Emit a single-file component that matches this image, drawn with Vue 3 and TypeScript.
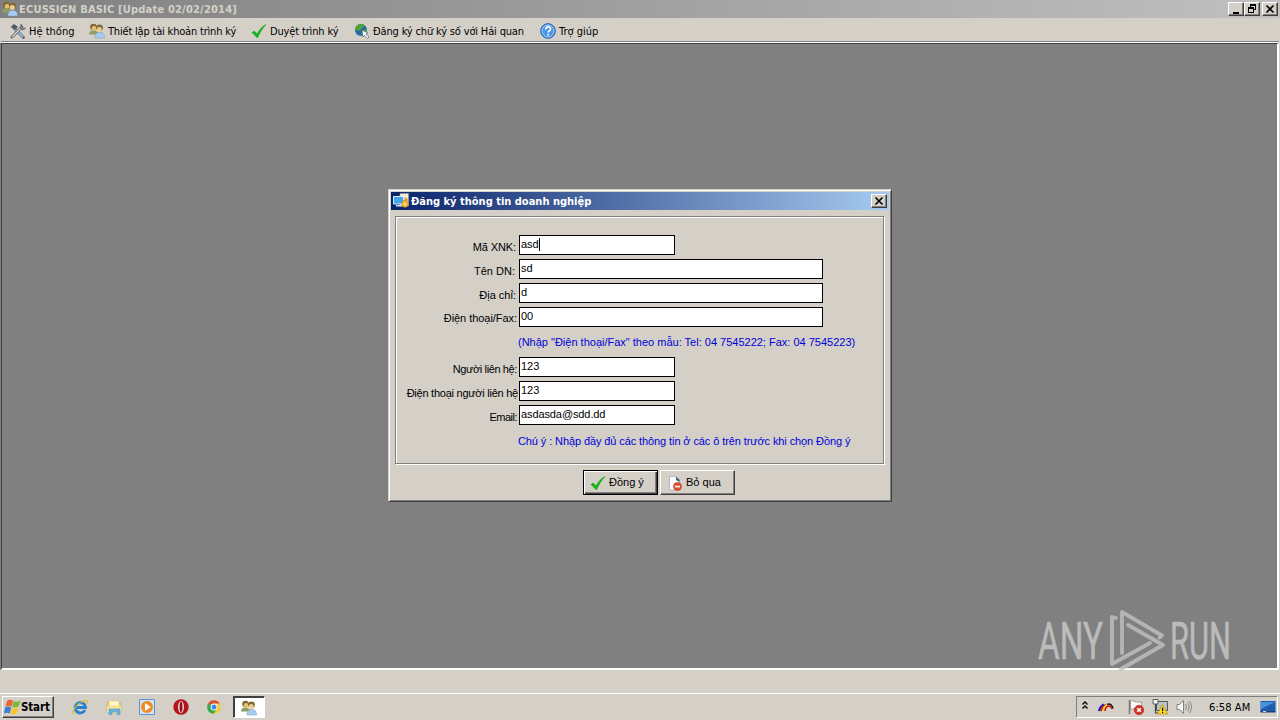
<template>
  <div class="screen">
    <header class="app-title">
      <svg class="icon" viewBox="0 0 16 16">
        <use href="#people" />
      </svg>
      <span class="app-name">ECUSSIGN BASIC [Update 02/02/2014]</span>
      <div class="window-buttons">
        <button class="win-btn">
          <svg viewBox="0 0 12 10"><path d="M3 8h6v2H3z" /></svg>
        </button>
        <button class="win-btn">
          <svg viewBox="0 0 12 10">
            <path d="M4 0h6v6H8V5h1V2H5v1H4zM2 3h6v6H2zM3 5v3h4V5z" fill-rule="evenodd" />
          </svg>
        </button>
        <button class="win-btn close">
          <svg viewBox="0 0 12 10"><path d="M2.500 1.500l7 7m0-7l-7 7" stroke="#000" stroke-width="1.600" /></svg>
        </button>
      </div>
    </header>

    <nav class="menu">
      <div v-for="item in menuItems" :key="item.icon" :class="['menu-item', item.icon]">
        <svg class="icon" viewBox="0 0 16 16">
          <use :href="'#' + item.icon" />
        </svg>
        <span>{{ item.label }}</span>
      </div>
    </nav>

    <main class="workspace">
      <section class="dialog">
        <div class="dialog-title">
          <svg class="icon" viewBox="0 0 16 16">
            <use href="#form" />
          </svg>
          <h1>Đăng ký thông tin doanh nghiệp</h1>
          <button class="win-btn">
            <svg viewBox="0 0 12 10"><path d="M2.500 1.500l7 7m0-7l-7 7" stroke="#000" stroke-width="1.600" /></svg>
          </button>
        </div>

        <div class="group">
          <div v-for="field in company" :key="field.id" :class="['row', field.id]">
            <label><span>{{ field.label }}</span></label>
            <div :class="['input', { wide: field.wide }]">
              <span>{{ field.value }}</span><i v-if="field.focused" class="caret"></i>
            </div>
          </div>
          <p class="hint sample">(Nhập "Điện thoại/Fax" theo mẫu: Tel: 04 7545222; Fax: 04 7545223)</p>
          <div v-for="field in contact" :key="field.id" :class="['row', field.id]">
            <label><span>{{ field.label }}</span></label>
            <div class="input">
              <span>{{ field.value }}</span>
            </div>
          </div>
          <p class="hint note">Chú ý : Nhập đầy đủ các thông tin ở các ô trên trước khi chọn Đồng ý</p>
        </div>

        <div class="actions">
          <button class="action default">
            <svg class="icon" viewBox="0 0 16 16"><use href="#check" /></svg>
            <span>Đồng ý</span>
          </button>
          <button class="action">
            <svg class="icon" viewBox="0 0 16 16"><use href="#cancel" /></svg>
            <span>Bỏ qua</span>
          </button>
        </div>
      </section>
    </main>

    <div class="status"></div>

    <footer class="taskbar">
      <button class="start">
        <svg class="flag" viewBox="0 0 17 16">
          <path d="M3 2c2-1.500 4-1.500 6-.3L7.400 7.700C5.500 6.500 3.500 6.500 1.400 7.500z" fill="#e8642c" />
          <path d="M9.700 2c2 1 4.500.8 6.800-.5L14.800 7.300c-2.200 1.200-4.700 1.300-6.800.5z" fill="#7db83a" />
          <path d="M1.200 8.300c2-1 4-1 6 .1L5.700 14.500c-1.800-1.100-3.700-1.100-5.700-.1z" fill="#3a7fd0" />
          <path d="M7.900 8.700c2 1 4.500.8 6.700-.4L13 14.200c-2.200 1.400-4.600 1.500-6.600.5z" fill="#f6c52f" />
        </svg>
        <span>Start</span>
      </button>
      <div class="launchers">
        <svg v-for="name in launchers" :key="name" class="launcher" viewBox="0 0 16 16">
          <use :href="'#' + name" />
        </svg>
      </div>
      <div class="task">
        <svg class="icon" viewBox="0 0 16 16"><use href="#people" /></svg>
      </div>
      <div class="tray">
        <svg class="chevrons" viewBox="0 0 8 9">
          <path d="M1.500 3.500L4 1l2.500 2.500M1.500 7.500L4 5l2.500 2.500" fill="none" stroke="#000" stroke-width="1.300" />
        </svg>
        <svg class="tray-icon rainbow" viewBox="0 0 16 16">
          <path d="M9 5.500c3-1.500 5 .5 6 4" fill="none" stroke="#111" stroke-width="1.600" />
          <path d="M1 12c.5-3 2-5 5-6.500" fill="none" stroke="#1818c8" stroke-width="2" />
          <path d="M3 12c.5-3 2.500-5 5-6" fill="none" stroke="#d01818" stroke-width="2.200" />
          <path d="M5.200 12c.3-3 2-5 4.300-5.500" fill="none" stroke="#f5dc20" stroke-width="2" />
          <path d="M7 12c.3-3 2-5 4-5 1.500.2 2.500 1.500 3 3" fill="none" stroke="#d01818" stroke-width="1.600" />
        </svg>
        <svg class="tray-icon action-flag" viewBox="0 0 16 16">
          <path d="M1.500 1v14" stroke="#777" stroke-width="1.500" />
          <path d="M2.500 2c3-1 4 1 6 1h5v7h-11z" fill="#f8f8f8" stroke="#888" stroke-width=".8" />
          <circle cx="11" cy="11" r="4.700" fill="#d9302c" stroke="#a81818" stroke-width=".6" />
          <path d="M9.200 9.200l3.600 3.600m0-3.600l-3.600 3.600" stroke="#fff" stroke-width="1.600" />
        </svg>
        <svg class="tray-icon network" viewBox="0 0 16 16">
          <path d="M4.500 2.500h11v9h-11z" fill="#b9c3c8" stroke="#555" />
          <path d="M3.500 5v9h5" fill="none" stroke="#444" stroke-width="1.200" />
          <path d="M1 .5h5v4.500H1z" fill="#eee" stroke="#555" stroke-width=".9" />
          <path d="M10.500 5.500l5 9.500h-10z" fill="#ffdc28" stroke="#b58b00" stroke-width=".7" />
          <path d="M10 8.700h1.200v3.300H10zM10 12.800h1.200v1.200H10z" />
        </svg>
        <svg class="tray-icon speaker" viewBox="0 0 16 16">
          <path d="M1 5.500h2.500l4-4v13l-4-4H1z" fill="#f6f6f6" stroke="#777" stroke-width=".9" />
          <path d="M9.500 5q2 3 0 6M11.500 3.500q3.200 4.500 0 9M13.500 2q4 6 0 12" fill="none" stroke="#8a8a8a" />
        </svg>
        <span class="clock">6:58 AM</span>
        <svg class="tray-icon desktop" viewBox="0 0 16 16">
          <path d="M.5 2h15v11H.5z" fill="#1d5cae" />
          <path d="M1 3h14L1 10z" fill="#4a91dc" />
          <path d="M.5 12h15v1.500H.5z" fill="#183f78" />
          <path d="M3 12h3v1H3z" fill="#c7e3fa" />
        </svg>
      </div>
    </footer>

    <svg class="watermark" viewBox="0 0 210 70">
      <text x="8" y="56" textLength="65" lengthAdjust="spacingAndGlyphs">ANY</text>
      <g fill="none" stroke="#c2c2c2" stroke-width="3.800" stroke-linejoin="round" stroke-linecap="round">
        <path d="M86 15l-4-1v47l38-21" />
        <path d="M92 50V9l40 23.500-2.500 2" />
        <path d="M98 22l35 20-42 24" />
      </g>
      <text x="140" y="56" textLength="61" lengthAdjust="spacingAndGlyphs">RUN</text>
    </svg>

    <svg class="symbols" width="0" height="0">
      <symbol id="people" viewBox="0 0 16 16">
        <path d="M0 11.500c0-3 1.500-4 4.500-4S9 8.500 9 11.500z" fill="#8f9e62" />
        <path d="M6 15c0-4.500 2-5.500 5-5.500s4.500 1.500 4.500 5.500z" fill="#a9cdf0" stroke="#7494b8" stroke-width=".5" />
        <circle cx="4.500" cy="4" r="3.300" fill="#7d6a2c" />
        <circle cx="5" cy="5.300" r="2.200" fill="#e8c078" />
        <circle cx="10.500" cy="4.800" r="3.400" fill="#7d6a35" />
        <circle cx="10.200" cy="6.500" r="2.500" fill="#f0cc88" />
      </symbol>
      <symbol id="tools" viewBox="0 0 16 16">
        <path d="M4 5l9.500 9.500" stroke="#53657c" stroke-width="2.800" stroke-linecap="round" />
        <path d="M5 6l8 8" stroke="#a8c4e8" stroke-width="1.400" />
        <path d="M12 4L2 14" stroke="#555" stroke-width="2.800" stroke-linecap="round" />
        <path d="M12 4L2 14" stroke="#e0e0e0" stroke-width="1.300" />
        <path d="M.5 4L4 1l4 3-3 3-1.500-1.500z" fill="#525a64" />
        <path d="M11.500 1l-1 4 2 1.500L15.500 5" fill="none" stroke="#6f7780" stroke-width="1.800" />
      </symbol>
      <symbol id="check" viewBox="0 0 16 16">
        <path d="M1 9.500l2.300-1.500L6 11c2.500-4.500 5-7.500 9-9.500-4 4.500-6.500 8.500-8.500 13.500z" fill="#16b416" stroke="#0fa00f" stroke-width=".5" />
      </symbol>
      <symbol id="globe" viewBox="0 0 16 16">
        <circle cx="7" cy="7" r="6" fill="#2769a8" />
        <path d="M3 2.500C6 0 10 1 11 3L8 5 6 8 3 7 1 7q0-3 2-4.500zM8 8l4-2 1 2-3 5-3-2z" fill="#4ca43b" />
        <path d="M8 7l6 3-2 1 3 3-1.500 1.500-3-3L9 14z" fill="#f4f8fc" stroke="#567" stroke-width=".7" />
      </symbol>
      <symbol id="help" viewBox="0 0 16 16">
        <circle cx="8" cy="8" r="7.300" fill="#4b95e6" stroke="#1c5aac" />
        <circle cx="8" cy="8" r="6" fill="none" stroke="#b5dafa" stroke-width=".9" />
        <path d="M5.700 6.500C5.700 3 10.500 3.200 10.500 6c0 1.800-2.300 1.700-2.300 3.500M8.200 10.800v1.700" fill="none" stroke="#fff" stroke-width="1.600" />
      </symbol>
      <symbol id="form" viewBox="0 0 16 16">
        <path d="M7 .5h8.500V13H7z" fill="#f3efe0" stroke="#999" stroke-width=".6" />
        <path d="M.5 3.500h10v7.500H.5z" fill="#45a4ee" stroke="#d8eefc" />
        <path d="M3 12h6v1.500H3z" fill="#bfe0f8" />
        <path d="M10 9l2-5 3 2-1 4z" fill="#f0a030" />
        <circle cx="12" cy="11" r="3.300" fill="#f6bd3d" stroke="#c77c16" stroke-width=".6" />
        <circle cx="12" cy="11" r="1" fill="#fff2c0" />
      </symbol>
      <symbol id="cancel" viewBox="0 0 16 16">
        <path d="M2.500 1.500h6.500l3.500 3.500v10h-10z" fill="#fbfcff" stroke="#9eabc0" stroke-width=".8" />
        <path d="M9 1.500L12.500 5v2L9 5z" fill="#435a80" />
        <circle cx="10.500" cy="11.500" r="4" fill="#e0492f" stroke="#b82c18" stroke-width=".5" />
        <path d="M8 10.700h5v1.700H8z" fill="#fff" />
      </symbol>
      <symbol id="ie" viewBox="0 0 16 16">
        <path d="M13 11A5.200 5.200 0 1 1 13.500 8.500H4" fill="none" stroke="#2683d4" stroke-width="2.900" />
        <path d="M2.500 15C-1.500 14 4 4.500 13 1.500c3-.5 2.500 2 1.500 3.500" fill="none" stroke="#e9b72a" stroke-width="1.300" />
      </symbol>
      <symbol id="folder" viewBox="0 0 16 16">
        <path d="M1 3h5l1 1.500h8V13H1z" fill="#ead37b" stroke="#c4a642" stroke-width=".6" />
        <path d="M3 2h10v5H3z" fill="#fff7cb" stroke="#d4bd63" stroke-width=".5" />
        <path d="M1 7h14v6H1z" fill="#f5e295" />
        <path d="M3 15.500V10h11v5.500h-3V12.500H6v3z" fill="#65b2e4" stroke="#4d93c4" stroke-width=".5" />
      </symbol>
      <symbol id="player" viewBox="0 0 16 16">
        <path d="M.5.500h15v15H.5z" fill="#cfe4f8" stroke="#5c94cb" />
        <circle cx="8" cy="8" r="6" fill="#f08a1c" />
        <path d="M6 4l6 4-6 4z" fill="#fff" />
      </symbol>
      <symbol id="opera" viewBox="0 0 16 16">
        <circle cx="8" cy="8" r="7.700" fill="#b5141c" />
        <ellipse cx="8" cy="8" rx="3" ry="6" fill="#e4d8d4" />
        <ellipse cx="8" cy="8" rx="1.400" ry="5.200" fill="#8c1016" />
      </symbol>
      <symbol id="chrome" viewBox="0 0 16 16">
        <circle cx="8" cy="8" r="6.800" fill="#f5cb2e" />
        <path d="M8 8L2.100 4.600A6.800 6.800 0 0 1 13.900 4.600H8z" fill="#dd4b39" />
        <path d="M8 8L2.100 4.600A6.800 6.800 0 0 0 7.500 14.800L11 9.500z" fill="#35a853" />
        <circle cx="8" cy="8" r="3.400" fill="#fff" />
        <circle cx="8" cy="8" r="2.500" fill="#4285f4" />
      </symbol>
    </svg>
  </div>
</template>

<script setup lang="ts">
interface MenuItem {
  icon: string;
  label: string;
}

interface Field {
  id: string;
  label: string;
  value: string;
  wide?: boolean;
  focused?: boolean;
}

const menuItems: MenuItem[] = [
  { icon: "tools", label: "Hệ thống" },
  { icon: "people", label: "Thiết lập tài khoản trình ký" },
  { icon: "check", label: "Duyệt trình ký" },
  { icon: "globe", label: "Đăng ký chữ ký số với Hải quan" },
  { icon: "help", label: "Trợ giúp" },
];

const company: Field[] = [
  { id: "code", label: "Mã XNK:", value: "asd", focused: true },
  { id: "name", label: "Tên DN:", value: "sd", wide: true },
  { id: "address", label: "Địa chỉ:", value: "d", wide: true },
  { id: "phone", label: "Điện thoại/Fax:", value: "00", wide: true },
];

const contact: Field[] = [
  { id: "person", label: "Người liên hệ:", value: "123" },
  { id: "person-phone", label: "Điện thoại người liên hệ", value: "123" },
  { id: "email", label: "Email:", value: "asdasda@sdd.dd" },
];

const launchers = ["ie", "folder", "player", "opera", "chrome"];
</script>

<style>
body {
  margin: 0;
  overflow: hidden;
}
</style>

<style scoped>
.screen {
  position: relative;
  display: flex;
  flex-direction: column;
  width: 1280px;
  height: 720px;
  overflow: hidden;
  background: #d4d0c8;
  color: #000;
  font-family: "DejaVu Sans Condensed", "DejaVu Sans", sans-serif;
  font-size: 11px;
  white-space: nowrap;
}

.icon {
  flex: none;
  width: 16px;
  height: 16px;
}

.app-title {
  display: flex;
  align-items: center;
  height: 18px;
  padding: 0 2px;
  background: linear-gradient(90deg, #808080, #c0c0c0);
  color: #d4d0c8;
}

.app-name {
  flex: 1;
  margin-left: 1px;
  font-weight: bold;
  letter-spacing: 0.200px;
}

.window-buttons {
  display: flex;
}

.win-btn {
  box-sizing: border-box;
  display: flex;
  width: 16px;
  height: 14px;
  padding: 1px;
  border: 1px solid;
  border-color: #fff #404040 #404040 #fff;
  background: #d4d0c8;
  box-shadow: inset -1px -1px #808080;
}

.win-btn svg {
  width: 12px;
  height: 10px;
}

.win-btn.close {
  margin-left: 2px;
}

.menu {
  box-sizing: border-box;
  display: flex;
  align-items: center;
  height: 23px;
  padding: 2px 0 0 10px;
}

.menu-item {
  display: flex;
  align-items: center;
  gap: 3px;
}

.menu-item span {
  padding-top: 1px;
}

.menu-item.tools {
  width: 79px;
}

.menu-item.people {
  width: 162px;
  letter-spacing: -0.190px;
}

.menu-item.check {
  width: 103px;
  letter-spacing: -0.150px;
}

.menu-item.globe {
  width: 186px;
  letter-spacing: -0.160px;
}

.workspace {
  box-sizing: border-box;
  height: 627px;
  padding: 145px 0 0 386px;
  margin: 2px 1px 0;
  border: 1px solid #404040;
  border-right: 2px solid #fff;
  border-bottom: 2px solid #fff;
  background: #808080;
  box-shadow: 0 -1px #fff, 0 -2px #808080, -1px 0 #808080;
}

.dialog {
  box-sizing: border-box;
  width: 504px;
  height: 313px;
  padding: 2px;
  border: 1px solid;
  border-color: #d4d0c8 #404040 #404040 #d4d0c8;
  background: #d4d0c8;
  box-shadow: inset 1px 1px #fff, inset -1px -1px #808080;
  font-family: "Liberation Sans", sans-serif;
}

.dialog-title {
  display: flex;
  align-items: center;
  height: 18px;
  padding: 0 2px;
  background: linear-gradient(90deg, #0a246a, #a6caf0);
  color: #fff;
}

.dialog-title h1 {
  flex: 1;
  margin: 0 0 0 2px;
  font: bold 11px "DejaVu Sans Condensed", sans-serif;
}

.group {
  box-sizing: border-box;
  width: 489px;
  height: 248px;
  margin: 6px 0 0 4px;
  padding-top: 18px;
  border: 1px solid #808080;
  box-shadow: inset 1px 1px #fff, 1px 1px #fff;
}

.row {
  display: flex;
  height: 20px;
  margin-bottom: 4px;
}

.row label {
  width: 120px;
  padding-top: 5px;
  margin-right: 3px;
  text-align: right;
  line-height: 14px;
}

.row.code label {
  letter-spacing: -0.100px;
}

.row.name label {
  width: 119px;
  margin-right: 4px;
}

.row.phone label {
  width: 121px;
  padding-top: 4px;
  margin-right: 2px;
  letter-spacing: -0.050px;
}

.row.person label {
  width: 121px;
  margin-right: 2px;
  letter-spacing: -0.380px;
}

.row.person-phone label {
  width: 122px;
  margin-right: 1px;
  letter-spacing: -0.250px;
}

.row.email label {
  width: 121px;
  margin-right: 2px;
  letter-spacing: -0.500px;
}

.input {
  box-sizing: border-box;
  display: flex;
  width: 156px;
  height: 20px;
  padding: 1px;
  border: 1px solid #000;
  background: #fff;
  line-height: 14px;
}

.input.wide {
  width: 304px;
}

.email .input {
  letter-spacing: -0.100px;
}

.caret {
  width: 1px;
  height: 13px;
  margin-top: 1px;
  background: #000;
}

.hint {
  margin: 0 0 0 122px;
  color: #0000d8;
  line-height: 14px;
}

.sample {
  padding: 4px 0 8px;
}

.note {
  padding-top: 5px;
  letter-spacing: -0.100px;
}

.actions {
  display: flex;
  gap: 2px;
  margin: 6px 0 0 192px;
}

.action {
  box-sizing: border-box;
  display: flex;
  align-items: center;
  gap: 3px;
  width: 75px;
  height: 25px;
  padding: 0 0 0 6px;
  border: 1px solid;
  border-color: #fff #404040 #404040 #fff;
  background: #d4d0c8;
  box-shadow: inset -1px -1px #808080;
  font: 11px "Liberation Sans", sans-serif;
}

.action span {
  padding-bottom: 2px;
}

.action.default {
  border-color: #000;
  box-shadow: inset 1px 1px #fff, inset -1px -1px #404040, inset -2px -2px #808080;
}

.status {
  height: 23px;
}

.taskbar {
  box-sizing: border-box;
  display: flex;
  height: 27px;
  padding: 2px 2px 1px;
  border-top: 1px solid #fff;
}

.start {
  box-sizing: border-box;
  display: flex;
  align-items: center;
  width: 52px;
  height: 22px;
  padding: 0 0 0 1px;
  border: 1px solid;
  border-color: #fff #404040 #404040 #fff;
  background: #d4d0c8;
  box-shadow: inset -1px -1px #808080;
  font: bold 11.500px "DejaVu Sans Condensed", sans-serif;
  letter-spacing: -0.150px;
}

.flag {
  flex: none;
  width: 17px;
  height: 16px;
}

.launchers {
  display: flex;
  gap: 17.500px;
  padding: 3px 0 0 18px;
}

.launcher {
  width: 16px;
  height: 16px;
}

.task {
  box-sizing: border-box;
  width: 32px;
  height: 22px;
  margin-left: 11px;
  padding: 3px 0 0 7px;
  border: 1px solid;
  border-color: #404040 #fff #fff #404040;
  background: #fff;
  box-shadow: inset 1px 1px #404040;
}

.tray {
  box-sizing: border-box;
  display: flex;
  align-items: center;
  width: 202px;
  height: 22px;
  margin-left: auto;
  padding-left: 4px;
  border: 1px solid;
  border-color: #808080 #fff #fff #808080;
}

.chevrons {
  width: 8px;
  height: 9px;
  margin: 0 9px 3px 0;
}

.tray-icon {
  flex: none;
  width: 16px;
  height: 16px;
}

.rainbow {
  margin-right: 14px;
}

.action-flag,
.network {
  margin-right: 8px;
}

.clock {
  width: 51px;
  margin-left: 17px;
  letter-spacing: 0.100px;
}

.watermark {
  position: absolute;
  left: 1030px;
  top: 603px;
  width: 210px;
  height: 70px;
  overflow: visible;
  opacity: 0.8;
}

.watermark text {
  fill: #cacaca;
  stroke: #cacaca;
  stroke-width: 0.600px;
  font-family: Roboto, sans-serif;
  font-size: 52px;
}

.symbols {
  position: absolute;
}
</style>
